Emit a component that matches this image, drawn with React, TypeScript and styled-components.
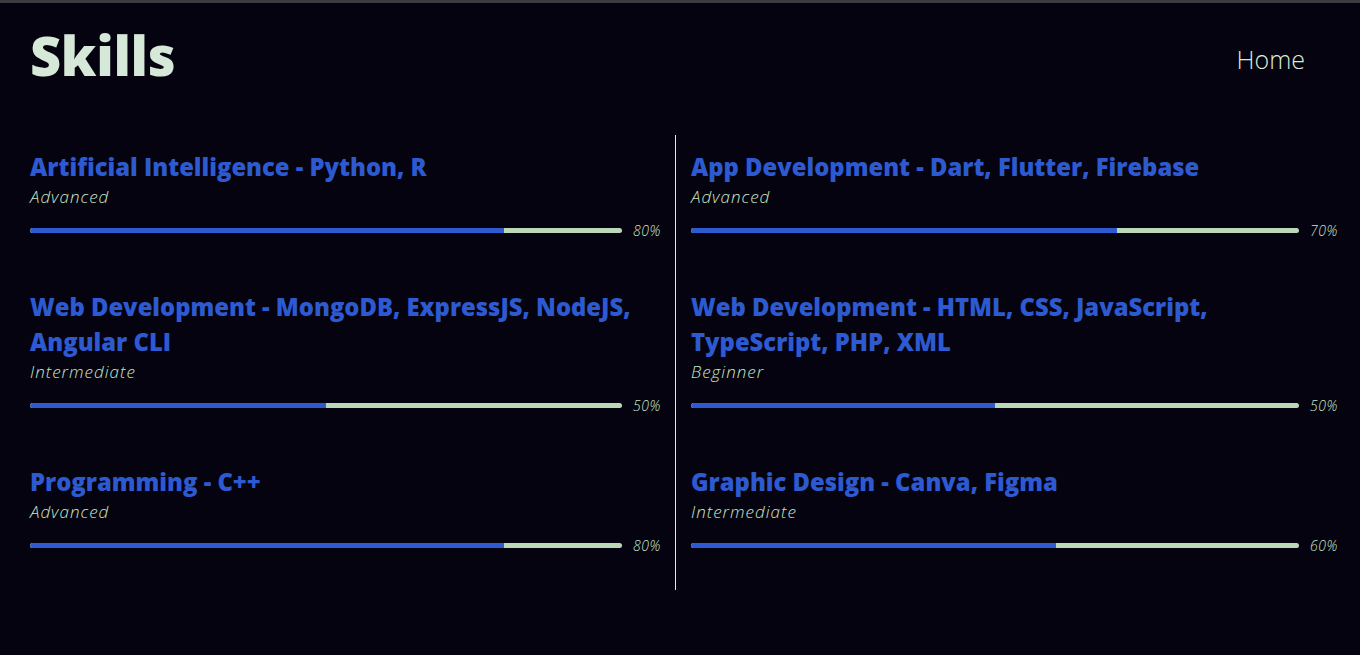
import React from "react";
import styled, { createGlobalStyle } from "styled-components";

const GlobalStyle = createGlobalStyle`
  html, body {
    margin: 0;
    padding: 0;
    background: #05030f;
  }
  body {
    font-family: "Open Sans", "Liberation Sans", sans-serif;
    border-top: 3px solid #3c3c40;
  }
`;

const Page = styled.div`
  min-height: 652px;
  background: #05030f;
  padding: 0 8px 0 30px;
`;

const Header = styled.header`
  display: flex;
  align-items: center;
  justify-content: space-between;
  height: 110px;
  padding-right: 47px;
`;

const Title = styled.h1`
  margin: 0;
  font-size: 54px;
  font-weight: 800;
  letter-spacing: -0.3px;
  color: #d6e9d9;
  line-height: 1;
  margin-top: -6px;
`;

const NavLink = styled.a`
  font-size: 25px;
  font-weight: 300;
  color: #d8ecdc;
  text-decoration: none;
  margin-top: 1px;
`;

const Grid = styled.div`
  display: grid;
  grid-template-columns: 646px 1fr;
  margin-top: 22px;
`;

const Column = styled.div<{ $divider?: boolean }>`
  padding: 0 15px 0 ${(p) => (p.$divider ? "0" : "15px")};
  border-right: ${(p) => (p.$divider ? "1px solid #e6e6e6" : "none")};
`;

const Item = styled.div`
  padding: 15px 0 36px;
`;

const SkillName = styled.h3`
  margin: 0;
  font-size: 23.8px;
  font-weight: 800;
  line-height: 35px;
  color: #2d5ad0;
`;

const Level = styled.div`
  font-size: 17px;
  font-weight: 300;
  font-style: italic;
  letter-spacing: 1px;
  line-height: 24px;
  color: #c8e6c6;
`;

const BarRow = styled.div`
  display: flex;
  align-items: center;
  gap: 11px;
  margin-top: 12px;
  height: 18px;
`;

const Track = styled.div`
  flex: 1;
  height: 5px;
  border-radius: 3px;
  background: #bad7b8;
  overflow: hidden;
`;

const Fill = styled.div`
  height: 100%;
  background: #2d5ad0;
  border-radius: 3px 0 0 3px;
`;

const Percent = styled.span`
  font-size: 14px;
  font-style: italic;
  font-weight: 300;
  letter-spacing: 0.6px;
  color: #c8e6c6;
  width: 27px;
  text-align: right;
  white-space: nowrap;
`;

type Skill = { name: string; level: string; pct: number };

const left: Skill[] = [
  { name: "Artificial Intelligence - Python, R", level: "Advanced", pct: 80 },
  {
    name: "Web Development - MongoDB, ExpressJS, NodeJS, Angular CLI",
    level: "Intermediate",
    pct: 50,
  },
  { name: "Programming - C++", level: "Advanced", pct: 80 },
];

const right: Skill[] = [
  { name: "App Development - Dart, Flutter, Firebase", level: "Advanced", pct: 70 },
  {
    name: "Web Development - HTML, CSS, JavaScript, TypeScript, PHP, XML",
    level: "Beginner",
    pct: 50,
  },
  { name: "Graphic Design - Canva, Figma", level: "Intermediate", pct: 60 },
];

const SkillItem = ({ s }: { s: Skill }) => (
  <Item>
    <SkillName>{s.name}</SkillName>
    <Level>{s.level}</Level>
    <BarRow>
      <Track>
        <Fill style={{ width: `${s.pct}%` }} />
      </Track>
      <Percent>{s.pct}%</Percent>
    </BarRow>
  </Item>
);

export default function App() {
  return (
    <>
      <GlobalStyle />
      <Page>
        <Header>
          <Title>Skills</Title>
          <NavLink href="#">Home</NavLink>
        </Header>
        <Grid>
          <Column $divider>
            {left.map((s) => (
              <SkillItem key={s.name} s={s} />
            ))}
          </Column>
          <Column>
            {right.map((s) => (
              <SkillItem key={s.name} s={s} />
            ))}
          </Column>
        </Grid>
      </Page>
    </>
  );
}
